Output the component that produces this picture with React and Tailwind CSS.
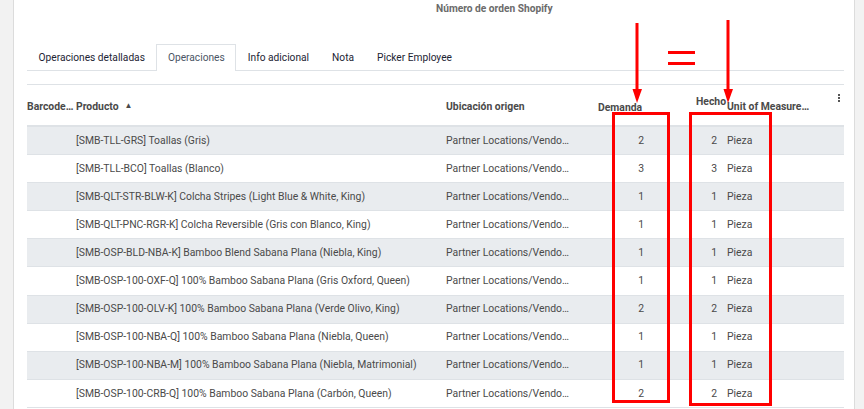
import React from 'react';

const rows = [
  { product: '[SMB-TLL-GRS] Toallas (Gris)', demand: 2 },
  { product: '[SMB-TLL-BCO] Toallas (Blanco)', demand: 3 },
  { product: '[SMB-QLT-STR-BLW-K] Colcha Stripes (Light Blue & White, King)', demand: 1 },
  { product: '[SMB-QLT-PNC-RGR-K] Colcha Reversible (Gris con Blanco, King)', demand: 1 },
  { product: '[SMB-OSP-BLD-NBA-K] Bamboo Blend Sabana Plana (Niebla, King)', demand: 1 },
  { product: '[SMB-OSP-100-OXF-Q] 100% Bamboo Sabana Plana (Gris Oxford, Queen)', demand: 1 },
  { product: '[SMB-OSP-100-OLV-K] 100% Bamboo Sabana Plana (Verde Olivo, King)', demand: 2 },
  { product: '[SMB-OSP-100-NBA-Q] 100% Bamboo Sabana Plana (Niebla, Queen)', demand: 1 },
  { product: '[SMB-OSP-100-NBA-M] 100% Bamboo Sabana Plana (Niebla, Matrimonial)', demand: 1 },
  { product: '[SMB-OSP-100-CRB-Q] 100% Bamboo Sabana Plana (Carbón, Queen)', demand: 2 },
];

const tabs = ['Operaciones detalladas', 'Operaciones', 'Info adicional', 'Nota', 'Picker Employee'];

const cols = 'grid grid-cols-[46px_370px_132px_73px_73px_93px_1fr]';

// Flechas y recuadros rojos encima de la tabla
function Annotations() {
  return (
    <svg className="absolute inset-0 pointer-events-none" width="864" height="409" viewBox="0 0 864 409">
      <g fill="#ff0000" stroke="none">
        <rect x="635.5" y="23" width="3" height="70" />
        <polygon points="632.5,89 642,89 637,103" />
        <rect x="726.5" y="20" width="3" height="72" />
        <polygon points="723.5,89 733,89 728,103" />
        <rect x="668" y="51" width="27" height="3" />
        <rect x="668" y="62" width="27" height="3" />
      </g>
      <g fill="none" stroke="#ff0000" strokeWidth="3">
        <rect x="613.5" y="113.5" width="55" height="288" />
        <rect x="690.5" y="113.5" width="80" height="291" />
      </g>
    </svg>
  );
}

export default function App() {
  return (
    <div
      className="relative w-[864px] h-[409px] overflow-hidden bg-[#f2f2f2] flex pl-[13px] pr-[9px]"
      style={{ fontFamily: 'Roboto, "Liberation Sans", sans-serif' }}
    >
      <div className="flex-1 bg-white border-l border-r border-[#dcdcdc] pl-[13px] pr-[10px] flex flex-col">
        <div className="h-[17px] pl-[409px] pt-[2px] text-[10.2px] font-bold text-[#6b6b6b] leading-[13px]">
          Número de orden Shopify
        </div>

        <div className="mt-[27px] flex border-b border-[#dee2e6] h-[27px]">
          {tabs.map((t, i) => (
            <div
              key={t}
              className={
                'px-[10.5px] text-[10.2px] leading-[26px] whitespace-nowrap ' +
                (i === 1
                  ? 'border border-b-0 border-[#dee2e6] bg-white text-[#4a5565] -mb-px h-[27px]'
                  : 'text-[#1c2433] border border-transparent')
              }
            >
              {t}
            </div>
          ))}
        </div>

        <div className="mt-[13px] border-t border-[#dee2e6]">
          <div className={cols + ' h-[42px] border-b-2 border-[#dee2e6] text-[10.4px] font-bold text-[#4a4a4a]'}>
            <div className="pt-[14px] whitespace-nowrap">Barcode…</div>
            <div className="pt-[14px] pl-[3px] flex items-start gap-[6px]">
              Producto
              <span className="text-[8px] leading-[14px]">▲</span>
            </div>
            <div className="pt-[14px] pl-[3px]">Ubicación origen</div>
            <div className="pt-[15px] pl-[23px]">Demanda</div>
            <div className="pt-[9px] text-right mr-[-5px] whitespace-nowrap">Hecho</div>
            <div className="pt-[14px] pl-[6px] whitespace-nowrap">Unit of Measure…</div>
            <div className="pt-[9px] flex justify-end pr-[4px]">
              <div className="flex flex-col gap-[1px]">
                <span className="w-[2px] h-[2px] bg-[#555]" />
                <span className="w-[2px] h-[2px] bg-[#555]" />
                <span className="w-[2px] h-[2px] bg-[#555]" />
              </div>
            </div>
          </div>

          {rows.map((r, i) => (
            <div
              key={r.product}
              className={
                cols +
                ' h-[28.1px] items-center border-b border-[#dee2e6] text-[10.4px] text-[#4a4a4a] ' +
                (i % 2 === 0 ? 'bg-[#e9ecef]' : 'bg-white')
              }
            >
              <div />
              <div className="pl-[3px] whitespace-nowrap">{r.product}</div>
              <div className="pl-[3px] whitespace-nowrap">Partner Locations/Vendo…</div>
              <div className="text-right pr-[4px]">{r.demand}</div>
              <div className="text-right pr-[4px]">{r.demand}</div>
              <div className="pl-[6px]">Pieza</div>
              <div />
            </div>
          ))}
        </div>
      </div>
      <Annotations />
    </div>
  );
}
